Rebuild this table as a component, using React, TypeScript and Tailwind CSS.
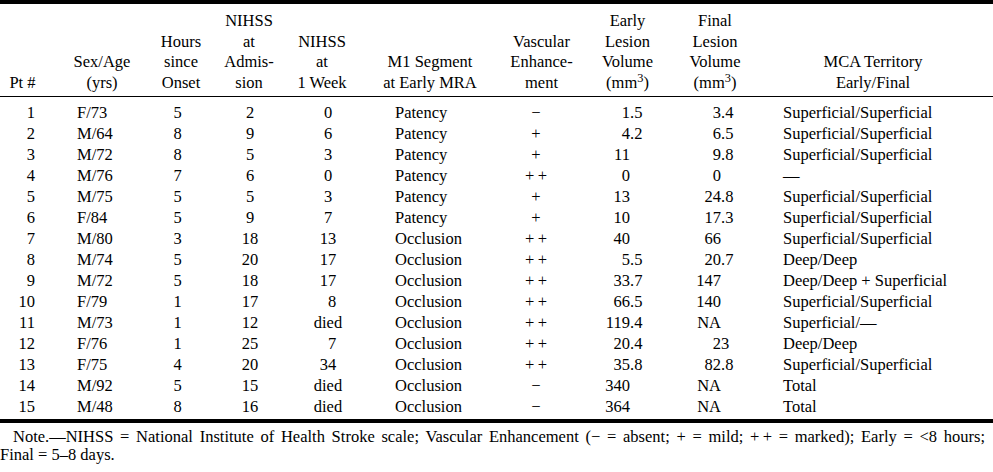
const MCA_SS = 'Superficial/Superficial'

type Row = {
  pt: string
  sex: string
  hours: string
  adm: string
  week: string
  m1: string
  vasc: string
  early: [string, string]
  final: [string, string]
  mca: string
}

const ROWS: Row[] = [
  { pt: '1', sex: 'F/73', hours: '5', adm: '2', week: '0', m1: 'Patency', vasc: '−', early: ['1', '.5'], final: ['3', '.4'], mca: MCA_SS },
  { pt: '2', sex: 'M/64', hours: '8', adm: '9', week: '6', m1: 'Patency', vasc: '+', early: ['4', '.2'], final: ['6', '.5'], mca: MCA_SS },
  { pt: '3', sex: 'M/72', hours: '8', adm: '5', week: '3', m1: 'Patency', vasc: '+', early: ['11', ''], final: ['9', '.8'], mca: MCA_SS },
  { pt: '4', sex: 'M/76', hours: '7', adm: '6', week: '0', m1: 'Patency', vasc: '+\u2009+', early: ['0', ''], final: ['0', ''], mca: '—' },
  { pt: '5', sex: 'M/75', hours: '5', adm: '5', week: '3', m1: 'Patency', vasc: '+', early: ['13', ''], final: ['24', '.8'], mca: MCA_SS },
  { pt: '6', sex: 'F/84', hours: '5', adm: '9', week: '7', m1: 'Patency', vasc: '+', early: ['10', ''], final: ['17', '.3'], mca: MCA_SS },
  { pt: '7', sex: 'M/80', hours: '3', adm: '18', week: '13', m1: 'Occlusion', vasc: '+\u2009+', early: ['40', ''], final: ['66', ''], mca: MCA_SS },
  { pt: '8', sex: 'M/74', hours: '5', adm: '20', week: '17', m1: 'Occlusion', vasc: '+\u2009+', early: ['5', '.5'], final: ['20', '.7'], mca: 'Deep/Deep' },
  { pt: '9', sex: 'M/72', hours: '5', adm: '18', week: '17', m1: 'Occlusion', vasc: '+\u2009+', early: ['33', '.7'], final: ['147', ''], mca: 'Deep/Deep + Superficial' },
  { pt: '10', sex: 'F/79', hours: '1', adm: '17', week: '\u20078', m1: 'Occlusion', vasc: '+\u2009+', early: ['66', '.5'], final: ['140', ''], mca: MCA_SS },
  { pt: '11', sex: 'M/73', hours: '1', adm: '12', week: 'died', m1: 'Occlusion', vasc: '+\u2009+', early: ['119', '.4'], final: ['NA', ''], mca: 'Superficial/—' },
  { pt: '12', sex: 'F/76', hours: '1', adm: '25', week: '\u20077', m1: 'Occlusion', vasc: '+\u2009+', early: ['20', '.4'], final: ['2', '3'], mca: 'Deep/Deep' },
  { pt: '13', sex: 'F/75', hours: '4', adm: '20', week: '34', m1: 'Occlusion', vasc: '+\u2009+', early: ['35', '.8'], final: ['82', '.8'], mca: MCA_SS },
  { pt: '14', sex: 'M/92', hours: '5', adm: '15', week: 'died', m1: 'Occlusion', vasc: '−', early: ['340', ''], final: ['NA', ''], mca: 'Total' },
  { pt: '15', sex: 'M/48', hours: '8', adm: '16', week: 'died', m1: 'Occlusion', vasc: '−', early: ['364', ''], final: ['NA', ''], mca: 'Total' },
]

const mm3 = (
  <>
    (mm<sup>3</sup>)
  </>
)

const HEADERS: { lines: React.ReactNode[]; cls: string }[] = [
  { lines: ['Pt #'], cls: 'pr-[5px]' },
  { lines: ['Sex/Age', '(yrs)'], cls: 'pl-[9px]' },
  { lines: ['Hours', 'since', 'Onset'], cls: 'pl-[7px]' },
  { lines: ['NIHSS', 'at', 'Admis-', 'sion'], cls: 'pl-[6px]' },
  { lines: ['NIHSS', 'at', '1 Week'], cls: 'pr-[3px]' },
  { lines: ['M1 Segment', 'at Early MRA'], cls: 'pr-[3px]' },
  { lines: ['Vascular', 'Enhance-', 'ment'], cls: '' },
  { lines: ['Early', 'Lesion', 'Volume', mm3], cls: '' },
  { lines: ['Final', 'Lesion', 'Volume', mm3], cls: '' },
  { lines: ['MCA Territory', 'Early/Final'], cls: 'pr-[7px]' },
]

const COLS = ['w-[50px]', 'w-[95px]', 'w-[65px]', 'w-[72px]', 'w-[83px]', 'w-[133px]', 'w-[87px]', 'w-[85px]', 'w-[90px]', 'w-[233px]']

export default function App() {
  return (
    <div className="w-[993px] h-[472px] bg-white text-black overflow-hidden font-['Liberation_Serif','Times_New_Roman',serif] text-[16.5px]">
      <div className="h-[4px] bg-black" />

      <table className="w-[993px] table-fixed border-collapse">
        <colgroup>
          {COLS.map((c, i) => (
            <col key={i} className={c} />
          ))}
        </colgroup>
        <thead>
          <tr>
            {HEADERS.map((h, i) => (
              <th
                key={i}
                className={`align-bottom text-center font-normal whitespace-nowrap leading-[20.7px] pt-[7px] pb-[2px] border-b border-black ${h.cls}`}
              >
                {h.lines.map((l, j) => (
                  <div key={j}>{l}</div>
                ))}
              </th>
            ))}
          </tr>
        </thead>
        <tbody>
          {ROWS.map((r, i) => {
            const first = i === 0
            const last = i === ROWS.length - 1
            const pad = first ? 'pt-[5px]' : last ? 'pb-[2.5px]' : ''
            return (
              <tr key={r.pt} className="leading-[21px] whitespace-nowrap">
                <td className={`text-right pr-[15px] ${pad}`}>{r.pt}</td>
                <td className={`text-left pl-[27px] ${pad}`}>{r.sex}</td>
                <td className={`text-center ${pad}`}>{r.hours}</td>
                <td className={`text-center pl-[8px] ${pad}`}>{r.adm}</td>
                <td className={`text-center pl-[9px] ${pad}`}>{r.week}</td>
                <td className={`text-left pl-[30px] ${pad}`}>{r.m1}</td>
                <td className={`text-center pr-[11px] ${pad}`}>{r.vasc}</td>
                <td className={`text-left ${pad}`}>
                  <span className="inline-block w-[45px] text-right">{r.early[0]}</span>
                  <span>{r.early[1]}</span>
                </td>
                <td className={`text-left ${pad}`}>
                  <span className="inline-block w-[51px] text-right">{r.final[0]}</span>
                  <span>{r.final[1]}</span>
                </td>
                <td className={`text-left pl-[23px] ${pad}`}>{r.mca}</td>
              </tr>
            )
          })}
        </tbody>
      </table>

      <div className="h-[4px] bg-black" />

      {/* Footnote */}
      <div className="pt-[5px] pr-[8px] leading-[18px]">
        <p className="indent-[13px] text-justify [text-align-last:justify]">
          Note.—NIHSS = National Institute of Health Stroke scale; Vascular Enhancement (− = absent; + = mild; +&#8201;+ =
          marked); Early = &lt;8 hours;
        </p>
        <p>Final = 5–8 days.</p>
      </div>
    </div>
  )
}
